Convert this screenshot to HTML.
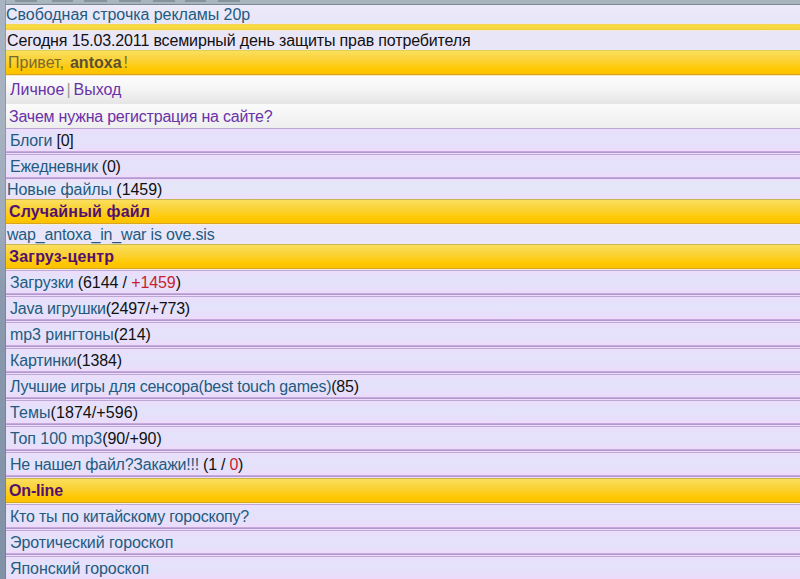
<!DOCTYPE html>
<html><head><meta charset="utf-8">
<style>
html,body{margin:0;padding:0;}
body{width:800px;height:579px;overflow:hidden;position:relative;background:#efdcfa;font-family:"Liberation Sans",sans-serif;font-size:16px;}
.a{position:absolute;left:6px;right:0;}
.t{position:absolute;white-space:nowrap;line-height:18px;}
.lk{color:#235a80;}
.pu{color:#6932a8;}
.bk{color:#111;}
.rd{color:#c81e30;}
.hd{background:linear-gradient(#fbdf5e,#f9d644 25%,#fcd02a 50%,#ffc800 78%,#fcc100);border-top:1px solid #c8b656;border-bottom:1px solid #d6a622;height:23px;}
.hd .t{font-weight:bold;color:#54106f;}
.m{background:linear-gradient(#eeddfb 0px,#e8dffb 3px,#e4e2fa 8px,#e6e0fb 16px,#ecdcfb 21px,#ecdcfb 22px,#c6a8dc 22px,#c6a8dc 23px);border-top:1px solid #bca8d4;border-bottom:1px solid #b098d0;height:23px;}
.cr{background:#f8ecdc;height:1px;}
#strip{position:absolute;left:0;top:0;width:6px;height:579px;background:linear-gradient(#a8b4c2 0px,#a6b2c0 120px,#9eaabb 230px,#8c9aae 290px,#8696ab 400px,#8292a6 579px);box-shadow:inset -1px 0 0 rgba(90,100,130,0.35);}
#top{position:absolute;left:0;top:0;width:800px;height:4px;background:#a9b5bd;border-bottom:1px solid #7d8896;}
.tab{position:absolute;top:0;height:2px;background:#86929c;}
</style></head><body>
<div id="top"></div>
<div class="tab" style="left:15px;width:22px"></div>
<div class="tab" style="left:52px;width:21px"></div>
<div class="tab" style="left:84px;width:23px"></div>
<div class="tab" style="left:119px;width:22px"></div>
<div class="tab" style="left:153px;width:22px"></div>
<div class="tab" style="left:185px;width:21px"></div>
<div class="tab" style="left:218px;width:22px"></div>

<!-- row 1 -->
<div class="a" style="top:5px;height:18px;background:linear-gradient(#ecebf9,#e9e6f8 70%,#e2e8f8)"></div>
<div class="t lk" style="left:6px;top:6px;letter-spacing:-0.04px">Свободная строчка рекламы 20р</div>
<div class="a cr" style="top:23px;background:#f2e6ea"></div>
<div class="a" style="top:24px;height:6px;background:linear-gradient(#eed858,#fadb46 30%,#f9d83e 65%,#e8cf46)"></div>
<div class="a cr" style="top:30px;background:#f9ead4"></div>
<!-- row 2 -->
<div class="a" style="top:31px;height:19px;background:#e9e6f8"></div>
<div class="t bk" style="left:7px;top:32px;letter-spacing:-0.14px">Сегодня 15.03.2011 всемирный день защиты прав потребителя</div>

<!-- header hello -->
<div class="a hd" style="top:50px;border-top-color:#dcd24e"></div>
<div class="t" style="left:8px;top:54px;color:#7c6a2c;">Привет, <b style="color:#5c5030;margin-left:1.5px">antoxa</b><span style="margin-left:2px">!</span></div>
<div class="a cr" style="top:75px;background:#f8e6c4"></div>
<!-- gray rows -->
<div class="a" style="top:76px;height:28px;background:linear-gradient(#fdfdfd,#f4f4f4 50%,#e5e5e5)"></div>
<div class="t pu" style="left:10px;top:81px;">Личное<span style="color:#999;margin-left:2px;margin-right:3px">|</span>Выход</div>
<div class="a" style="top:104px;height:24px;background:linear-gradient(#fbfbfb,#f3f3f3 60%,#eeeeee)"></div>
<div class="t pu" style="left:9px;top:108px;letter-spacing:-0.22px">Зачем нужна регистрация на сайте?</div>

<!-- menu rows -->
<div class="a m" style="top:128px"></div>
<div class="t lk" style="left:10px;top:132px;letter-spacing:-0.25px">Блоги <span class="bk">[0]</span></div>
<div class="a m" style="top:154px"></div>
<div class="t lk" style="left:10px;top:158px;letter-spacing:-0.26px">Ежедневник <span class="bk">(0)</span></div>
<div class="a" style="top:179px;height:20px;background:linear-gradient(#efdcfb 0px,#eae2fa 2px,#e5e7f9 5px,#e5e7f9 13px,#ebe2f9 17px,#ede0f9 20px)"></div>
<div class="t lk" style="left:7px;top:181px;letter-spacing:-0.06px">Новые файлы <span class="bk">(1459)</span></div>

<div class="a hd" style="top:199px"></div>
<div class="t" style="left:9px;top:203px;font-weight:bold;color:#54106f;letter-spacing:0.15px">Случайный файл</div>
<div class="a cr" style="top:224px"></div>
<div class="a" style="top:225px;height:18px;background:#e8e6f8"></div>
<div class="a cr" style="top:243px;background:#f2e6f2"></div>
<div class="t lk" style="left:7px;top:226px;letter-spacing:-0.18px">wap_antoxa_in_war is ove.sis</div>

<div class="a hd" style="top:244px"></div>
<div class="t" style="left:9px;top:248px;font-weight:bold;color:#54106f;letter-spacing:0.18px">Загруз-центр</div>
<div class="a cr" style="top:269px"></div>

<div class="a m" style="top:270px"></div>
<div class="t lk" style="left:10px;top:274px;letter-spacing:-0.11px">Загрузки <span class="bk">(6144 / <span class="rd">+1459</span>)</span></div>
<div class="a m" style="top:296px"></div>
<div class="t lk" style="left:10px;top:300px;letter-spacing:-0.23px">Java игрушки<span class="bk">(2497/+773)</span></div>
<div class="a m" style="top:322px"></div>
<div class="t lk" style="left:10px;top:326px;letter-spacing:-0.06px">mp3 рингтоны<span class="bk">(214)</span></div>
<div class="a m" style="top:348px"></div>
<div class="t lk" style="left:10px;top:352px;letter-spacing:-0.15px">Картинки<span class="bk">(1384)</span></div>
<div class="a m" style="top:374px"></div>
<div class="t lk" style="left:10px;top:378px;letter-spacing:-0.24px">Лучшие игры для сенсора(best touch games)<span class="bk">(85)</span></div>
<div class="a m" style="top:400px"></div>
<div class="t lk" style="left:10px;top:404px;letter-spacing:0.07px">Темы<span class="bk">(1874/+596)</span></div>
<div class="a m" style="top:426px"></div>
<div class="t lk" style="left:10px;top:430px;letter-spacing:-0.06px">Топ 100 mp3<span class="bk">(90/+90)</span></div>
<div class="a m" style="top:452px"></div>
<div class="t lk" style="left:10px;top:456px;letter-spacing:-0.25px">Не нашел файл?Закажи!!! <span class="bk">(1 / <span class="rd">0</span>)</span></div>

<div class="a hd" style="top:478px"></div>
<div class="t" style="left:9px;top:482px;font-weight:bold;color:#54106f;letter-spacing:-0.17px">On-line</div>
<div class="a cr" style="top:503px"></div>

<div class="a m" style="top:504px"></div>
<div class="t lk" style="left:10px;top:508px;letter-spacing:-0.21px">Кто ты по китайскому гороскопу?</div>
<div class="a m" style="top:530px"></div>
<div class="t lk" style="left:10px;top:534px;letter-spacing:-0.07px">Эротический гороскоп</div>
<div class="a m" style="top:556px"></div>
<div class="t lk" style="left:10px;top:560px;letter-spacing:-0.06px">Японский гороскоп</div>

<div id="strip"></div>
</body></html>
